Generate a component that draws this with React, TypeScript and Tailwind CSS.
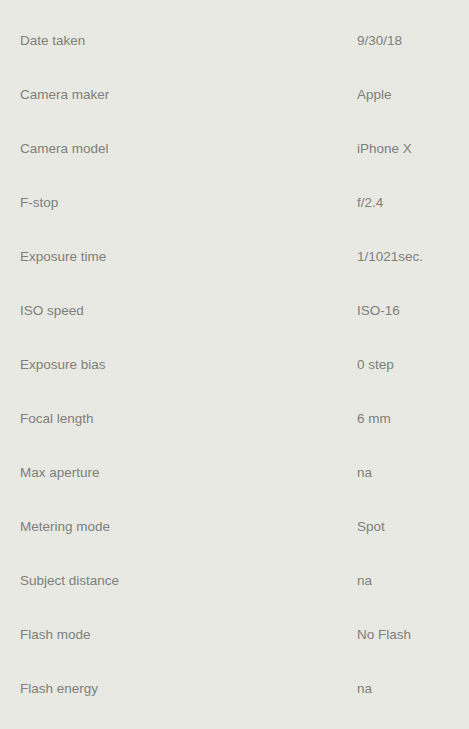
const ROWS: [string, string][] = [
  ["Date taken", "9/30/18"],
  ["Camera maker", "Apple"],
  ["Camera model", "iPhone X"],
  ["F-stop", "f/2.4"],
  ["Exposure time", "1/1021sec."],
  ["ISO speed", "ISO-16"],
  ["Exposure bias", "0 step"],
  ["Focal length", "6 mm"],
  ["Max aperture", "na"],
  ["Metering mode", "Spot"],
  ["Subject distance", "na"],
  ["Flash mode", "No Flash"],
  ["Flash energy", "na"],
];

export default function App() {
  return (
    <div
      className="w-full min-h-screen bg-[#e8e9e3] pt-[14px] pb-[13px] text-[13.5px] text-[#7e807b]"
      style={{ fontFamily: "'Liberation Sans', Arial, sans-serif" }}
    >
      {ROWS.map(([label, value]) => (
        <div key={label} className="h-[54px] flex items-center pl-[20px]">
          <span className="w-[337px]">{label}</span>
          <span>{value}</span>
        </div>
      ))}
    </div>
  );
}
